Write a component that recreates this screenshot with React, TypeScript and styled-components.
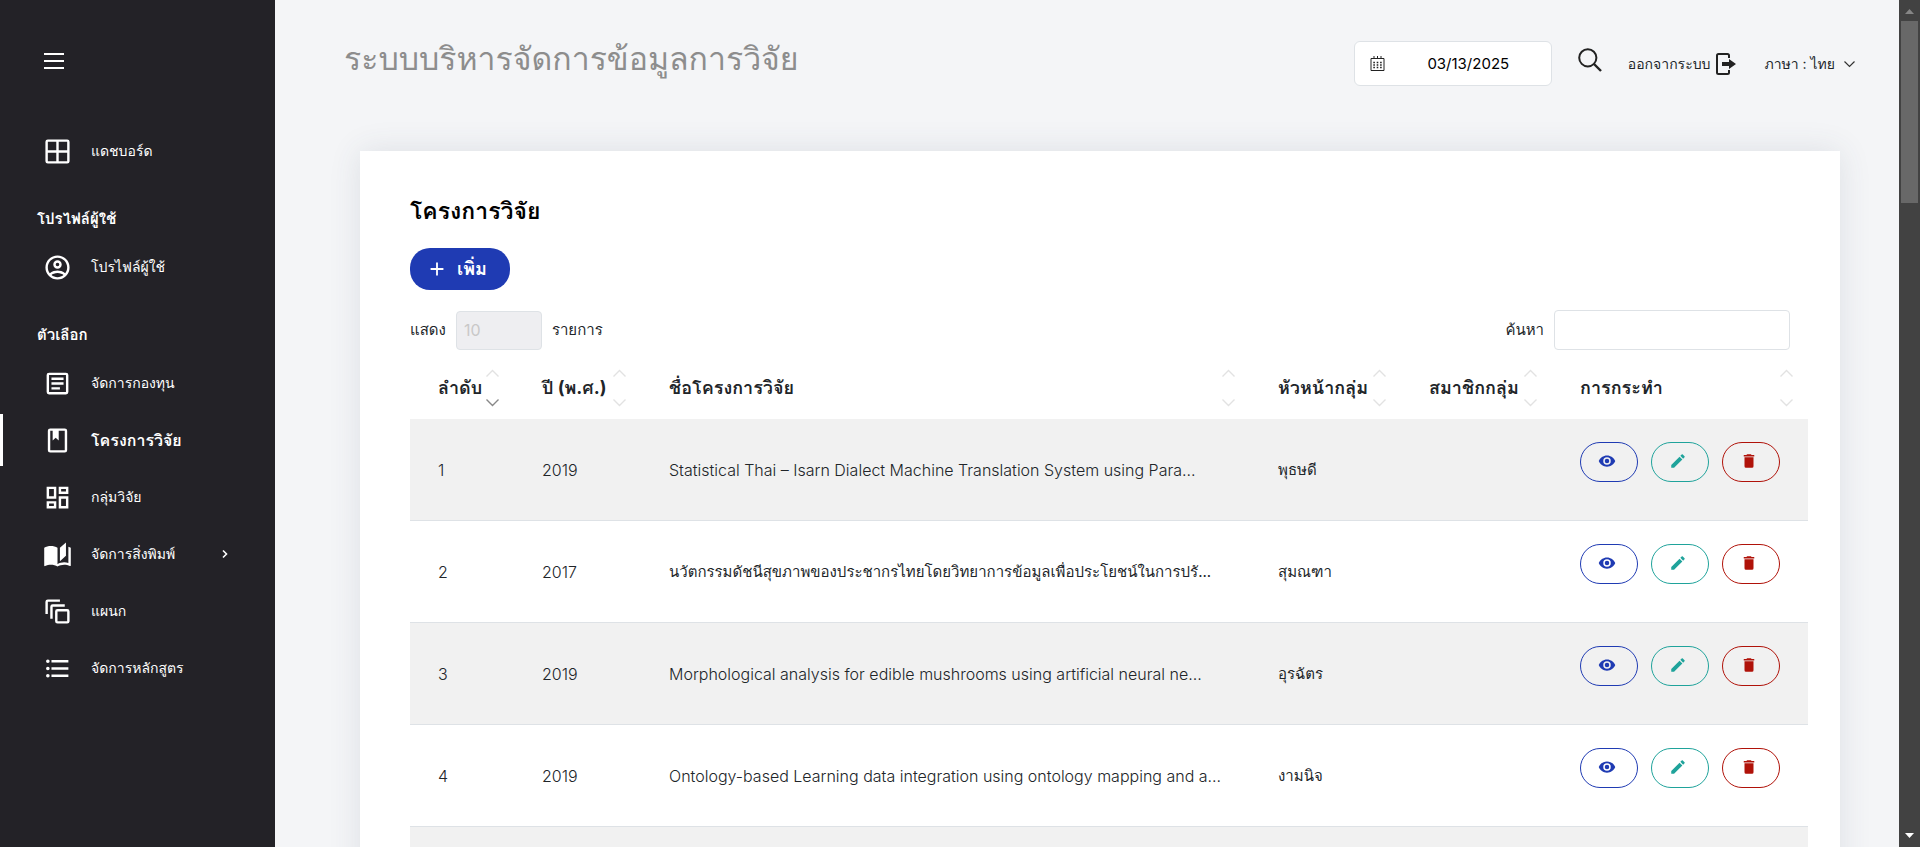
import React from 'react';
import styled, { createGlobalStyle } from 'styled-components';

const GlobalStyle = createGlobalStyle`
  *, *::before, *::after { box-sizing: border-box; }
  body {
    margin: 0;
    background: #f4f5f7;
    color: #212529;
    font-family: Inter, Loma, "Noto Sans", sans-serif;
    font-size: 14px;
    line-height: 20px;
  }
  a { color: inherit; text-decoration: none; }
  button, input, select { font: inherit; color: inherit; }
`;

const Shell = styled.div`
  display: flex;
  height: 100vh;
  overflow: hidden;
`;

const Sidebar = styled.aside`
  flex: 0 0 275px;
  background: #232227;
  color: #fff;
`;

const MenuToggle = styled.button`
  display: flex;
  margin: 51px 0 0 44px;
  padding: 0;
  border: 0;
  background: none;
  color: #fff;
`;

const Nav = styled.nav`
  display: flex;
  flex-direction: column;
  gap: 5px;
  padding-top: 54px;
`;

const NavCategory = styled.h2`
  margin: 0;
  padding: 27px 0 7px 37px;
  font-size: 15px;
  line-height: 20px;
  font-weight: 700;
`;

const NavItem = styled.a<{ $active?: boolean }>`
  display: flex;
  align-items: center;
  gap: 19px;
  height: 52px;
  padding: 0 46px 0 40px;
  border-left: 3px solid ${(p) => (p.$active ? '#fff' : 'transparent')};
  font-size: ${(p) => (p.$active ? '16px' : '14px')};
  font-weight: ${(p) => (p.$active ? 700 : 500)};
  svg:last-child:not(:first-child) { margin-left: auto; }
`;

const Main = styled.main`
  flex: 1;
  min-width: 0;
  overflow: hidden;
`;

const TopBar = styled.header`
  display: flex;
  align-items: center;
  height: 127px;
  padding: 0 44px 0 69px;
`;

const SiteTitle = styled.h1`
  margin: 0 auto 10px 0;
  color: #8d8d8d;
  font-size: 32px;
  line-height: 44px;
  font-weight: 400;
`;

const DateBox = styled.label`
  display: flex;
  align-items: center;
  width: 198px;
  height: 45px;
  padding-left: 14px;
  border: 1px solid #dee2e6;
  border-radius: 6px;
  background: #fff;
`;

const DateInput = styled.input`
  flex: 1;
  min-width: 0;
  margin: 0 10px;
  padding: 0;
  border: 0;
  outline: 0;
  background: none;
  color: #000;
  font-size: 15px;
  text-align: center;
`;

const SearchButton = styled.button`
  display: flex;
  margin: 0 26px 7px;
  padding: 0;
  border: 0;
  background: none;
`;

const TopLink = styled.a`
  display: flex;
  align-items: center;
  gap: 6px;
  margin-right: 28px;
`;

const LanguageButton = styled.button`
  display: flex;
  align-items: center;
  gap: 9px;
  padding: 0;
  border: 0;
  background: none;
`;

const Card = styled.section`
  margin: 24px 59px 0 85px;
  padding: 44px 50px;
  background: #fff;
  box-shadow: 0 0 30px rgba(60, 70, 100, 0.12);
`;

const CardTitle = styled.h2`
  margin: 0 0 21px;
  color: #000;
  font-size: 23px;
  line-height: 32px;
  font-weight: 700;
`;

const AddButton = styled.button`
  display: flex;
  align-items: center;
  gap: 9px;
  width: 100px;
  height: 42px;
  padding: 0 0 0 16px;
  border: 0;
  border-radius: 20px;
  background: #1f3bb3;
  color: #fff;
  font-size: 18px;
  font-weight: 700;
`;

const Controls = styled.div`
  display: flex;
  align-items: center;
  justify-content: space-between;
  height: 40px;
  margin: 20px 0 8px;
  font-size: 15px;
`;

const Field = styled.label`
  display: flex;
  align-items: center;
  gap: 10px;
`;

const LengthSelect = styled.select`
  appearance: none;
  width: 86px;
  height: 39px;
  padding: 0 7px;
  border: 1px solid #dee2e6;
  border-radius: 4px;
  background: #eeeef1;
  color: #c9c8c8;
  font-size: 16px;
  opacity: 1;
`;

const FilterInput = styled.input`
  width: 236px;
  height: 40px;
  padding: 0 8px;
  border: 1px solid #dee2e6;
  border-radius: 4px;
  background: #fff;
  outline: 0;
`;

const Table = styled.table`
  width: calc(100% + 18px);
  table-layout: fixed;
  border-collapse: separate;
  border-spacing: 0;
`;

const Col = styled.col<{ $w?: number }>`
  width: ${(p) => (p.$w ? `${p.$w}px` : 'auto')};
`;

const HeadCell = styled.th`
  height: 61px;
  padding: 0 15px 2px 28px;
  font-size: 18px;
  font-weight: 700;
  text-align: left;
  white-space: nowrap;
`;

const HeadContent = styled.div`
  display: flex;
  align-items: center;
  justify-content: space-between;
`;

const BodyRow = styled.tr`
  &:nth-child(odd) td { background: #f1f1f1; }
`;

const Cell = styled.td<{ $thai?: boolean }>`
  height: 102px;
  padding: 0 0 0 28px;
  border-bottom: 1px solid #dee2e6;
  font-size: ${(p) => (p.$thai ? '15px' : '16px')};
  font-weight: ${(p) => (p.$thai ? 400 : 300)};
  white-space: nowrap;
`;

const Actions = styled.div`
  display: flex;
  gap: 13px;
  padding-bottom: 16px;
`;

const ActionButton = styled.button<{ $color: string }>`
  display: flex;
  align-items: center;
  justify-content: center;
  width: 58px;
  height: 40px;
  padding: 0 4px 2px 0;
  border: 1px solid ${(p) => p.$color};
  border-radius: 20px;
  background: transparent;
  color: ${(p) => p.$color};
`;

const Scrollbar = styled.div`
  display: flex;
  flex-direction: column;
  align-items: center;
  justify-content: space-between;
  flex: 0 0 21px;
  padding: 9px 0;
  background: #424242;
`;

const ScrollTop = styled.div`
  display: flex;
  flex-direction: column;
  align-items: center;
  gap: 7px;
  height: 23.4%;
`;

const Thumb = styled.div`
  flex: 1;
  width: 17px;
  background: #686868;
`;

const MdiIcon = ({ d, size = 29 }: { d: string; size?: number }) => (
  <svg width={size} height={size} viewBox="0 0 24 24" fill="currentColor" aria-hidden="true">
    <path d={d} fillRule="evenodd" />
  </svg>
);

const icons = {
  grid: 'M4,2H20A2,2 0 0,1 22,4V20A2,2 0 0,1 20,22H4A2,2 0 0,1 2,20V4A2,2 0 0,1 4,2M4,4V11H11V4H4M4,20H11V13H4V20M20,20V13H13V20H20M20,4H13V11H20V4Z',
  account: 'M12,2A10,10 0 0,0 2,12A10,10 0 0,0 12,22A10,10 0 0,0 22,12A10,10 0 0,0 12,2M7.07,18.28C7.5,17.38 10.12,16.5 12,16.5C13.88,16.5 16.5,17.38 16.93,18.28C15.57,19.36 13.86,20 12,20C10.14,20 8.43,19.36 7.07,18.28M18.36,16.83C16.93,15.09 13.46,14.5 12,14.5C10.54,14.5 7.07,15.09 5.64,16.83C4.62,15.5 4,13.82 4,12C4,7.59 7.59,4 12,4C16.41,4 20,7.59 20,12C20,13.82 19.38,15.5 18.36,16.83M12,6C10.06,6 8.5,7.56 8.5,9.5C8.5,11.44 10.06,13 12,13C13.94,13 15.5,11.44 15.5,9.5C15.5,7.56 13.94,6 12,6M12,11A1.5,1.5 0 0,1 10.5,9.5A1.5,1.5 0 0,1 12,8A1.5,1.5 0 0,1 13.5,9.5A1.5,1.5 0 0,1 12,11Z',
  document: 'M5,3H19A2,2 0 0,1 21,5V19A2,2 0 0,1 19,21H5A2,2 0 0,1 3,19V5A2,2 0 0,1 5,3M5,5V19H19V5H5M7,7H17V9H7V7M7,11H17V13H7V11M7,15H14V17H7V15Z',
  book: 'M18,2A2,2 0 0,1 20,4V20A2,2 0 0,1 18,22H6A2,2 0 0,1 4,20V4A2,2 0 0,1 6,2H18M18,4H13V12L10.5,9.75L8,12V4H6V20H18V4Z',
  dashboard: 'M19,5V7H15V5H19M9,5V11H5V5H9M19,13V19H15V13H19M9,17V19H5V17H9M21,3H13V9H21V3M11,3H3V13H11V3M21,11H13V21H21V11M11,15H3V21H11V15Z',
  openBook: 'M19,2L14,6.5V17.5L19,13V2M6.5,5C4.55,5 2.45,5.4 1,6.5V21.16C1,21.41 1.25,21.66 1.5,21.66C1.6,21.66 1.65,21.59 1.75,21.59C3.1,20.94 5.05,20.5 6.5,20.5C8.45,20.5 10.55,20.9 12,22C13.35,21.15 15.8,20.5 17.5,20.5C19.15,20.5 20.85,20.81 22.25,21.56C22.35,21.61 22.4,21.59 22.5,21.59C22.75,21.59 23,21.34 23,21.09V6.5C22.4,6.05 21.75,5.75 21,5.5V19C19.9,18.65 18.7,18.5 17.5,18.5C15.8,18.5 13.35,19.15 12,20V6.5C10.55,5.4 8.45,5 6.5,5Z',
  layers: 'M4,2A2,2 0 0,0 2,4V14H4V4H14V2H4M8,6A2,2 0 0,0 6,8V18H8V8H18V6H8M20,12V20H12V12H20M20,10H12A2,2 0 0,0 10,12V20A2,2 0 0,0 12,22H20A2,2 0 0,0 22,20V12A2,2 0 0,0 20,10Z',
  list: 'M7,5H21V7H7V5M7,13V11H21V13H7M4,4.5A1.5,1.5 0 0,1 5.5,6A1.5,1.5 0 0,1 4,7.5A1.5,1.5 0 0,1 2.5,6A1.5,1.5 0 0,1 4,4.5M4,10.5A1.5,1.5 0 0,1 5.5,12A1.5,1.5 0 0,1 4,13.5A1.5,1.5 0 0,1 2.5,12A1.5,1.5 0 0,1 4,10.5M7,19V17H21V19H7M4,16.5A1.5,1.5 0 0,1 5.5,18A1.5,1.5 0 0,1 4,19.5A1.5,1.5 0 0,1 2.5,18A1.5,1.5 0 0,1 4,16.5Z',
  eye: 'M12,9A3,3 0 0,0 9,12A3,3 0 0,0 12,15A3,3 0 0,0 15,12A3,3 0 0,0 12,9M12,17A5,5 0 0,1 7,12A5,5 0 0,1 12,7A5,5 0 0,1 17,12A5,5 0 0,1 12,17M12,4.5C7,4.5 2.73,7.61 1,12C2.73,16.39 7,19.5 12,19.5C17,19.5 21.27,16.39 23,12C21.27,7.61 17,4.5 12,4.5Z',
  pencil: 'M20.71,7.04C21.1,6.65 21.1,6 20.71,5.63L18.37,3.29C18,2.9 17.35,2.9 16.96,3.29L15.12,5.12L18.87,8.87M3,17.25V21H6.75L17.81,9.93L14.06,6.18L3,17.25Z',
  trash: 'M19,4H15.5L14.5,3H9.5L8.5,4H5V6H19M6,19A2,2 0 0,0 8,21H16A2,2 0 0,0 18,19V7H6V19Z',
  plus: 'M19,13H13V19H11V13H5V11H11V5H13V11H19V13Z',
};

const SortArrows = ({ active }: { active?: boolean }) => (
  <svg width="13" height="38" viewBox="0 0 13 38" fill="none" strokeWidth="1.4" aria-hidden="true">
    <path d="M.5 7.5 6.5 1.5l6 6" stroke="#e2e2e2" />
    <path d="M.5 30.5l6 6 6-6" stroke={active ? '#888' : '#e2e2e2'} />
  </svg>
);

const CalendarIcon = () => (
  <svg width="17" height="17" viewBox="0 0 16 17" fill="none" stroke="#222" aria-hidden="true">
    <path d="M1.5 3.5h13v12h-13zM4.5 1v3M8 1v3M11.5 1v3" />
    <path d="M3.8 7.5h1.6M7.2 7.5h1.6M10.6 7.5h1.6M3.8 10h1.6M7.2 10h1.6M10.6 10h1.6M3.8 12.5h1.6M7.2 12.5h1.6M10.6 12.5h1.6" strokeWidth="1.4" />
  </svg>
);

const columns = [
  { label: 'ลำดับ', width: 104, active: true },
  { label: 'ปี (พ.ศ.)', width: 127 },
  { label: 'ชื่อโครงการวิจัย' },
  { label: 'หัวหน้ากลุ่ม', width: 151 },
  { label: 'สมาชิกกลุ่ม', width: 151 },
  { label: 'การกระทำ', width: 256 },
];

const projects = [
  { id: 1, year: '2019', name: 'Statistical Thai – Isarn Dialect Machine Translation System using Para...', head: 'พุธษดี' },
  { id: 2, year: '2017', name: 'นวัตกรรมดัชนีสุขภาพของประชากรไทยโดยวิทยาการข้อมูลเพื่อประโยชน์ในการปรั...', head: 'สุมณฑา', thai: true },
  { id: 3, year: '2019', name: 'Morphological analysis for edible mushrooms using artificial neural ne...', head: 'อุรฉัตร' },
  { id: 4, year: '2019', name: 'Ontology-based Learning data integration using ontology mapping and a...', head: 'งามนิจ' },
];

const options = [
  { icon: icons.document, label: 'จัดการกองทุน' },
  { icon: icons.book, label: 'โครงการวิจัย', active: true },
  { icon: icons.dashboard, label: 'กลุ่มวิจัย' },
  { icon: icons.openBook, label: 'จัดการสิ่งพิมพ์', expandable: true },
  { icon: icons.layers, label: 'แผนก' },
  { icon: icons.list, label: 'จัดการหลักสูตร' },
];

export default function App() {
  return (
    <Shell>
      <GlobalStyle />
      <Sidebar>
        <MenuToggle type="button" aria-label="เมนู">
          <svg width="20" height="20" viewBox="0 0 20 20" stroke="currentColor" strokeWidth="2">
            <path d="M0 3h20M0 10h20M0 17h20" />
          </svg>
        </MenuToggle>
        <Nav>
          <NavItem href="#dashboard"><MdiIcon d={icons.grid} />แดชบอร์ด</NavItem>
          <NavCategory>โปรไฟล์ผู้ใช้</NavCategory>
          <NavItem href="#profile"><MdiIcon d={icons.account} />โปรไฟล์ผู้ใช้</NavItem>
          <NavCategory>ตัวเลือก</NavCategory>
          {options.map((o) => (
            <NavItem key={o.label} href="#option" $active={o.active}>
              <MdiIcon d={o.icon} />
              {o.label}
              {o.expandable && (
                <svg width="8" height="10" viewBox="0 0 8 10" fill="none" stroke="currentColor" strokeWidth="1.6">
                  <path d="M2 1.5 5.5 5 2 8.5" />
                </svg>
              )}
            </NavItem>
          ))}
        </Nav>
      </Sidebar>

      <Main>
        <TopBar>
          <SiteTitle>ระบบบริหารจัดการข้อมูลการวิจัย</SiteTitle>
          <DateBox>
            <CalendarIcon />
            <DateInput type="text" defaultValue="03/13/2025" aria-label="วันที่" />
          </DateBox>
          <SearchButton type="button" aria-label="ค้นหา">
            <svg width="24" height="24" viewBox="0 0 24 24" fill="none" stroke="#222" strokeWidth="2">
              <circle cx="9.8" cy="9.8" r="8.6" />
              <path d="m16 16 7 7" strokeWidth="2.4" />
            </svg>
          </SearchButton>
          <TopLink href="#logout">
            ออกจากระบบ
            <svg width="20" height="22" viewBox="0 0 20 22" fill="none" stroke="#222" strokeWidth="2">
              <path d="M13 5V2.500a1.500 1.500 0 0 0-1.500-1.500h-9A1.500 1.500 0 0 0 1 2.500v17A1.500 1.500 0 0 0 2.500 21h9a1.500 1.500 0 0 0 1.500-1.500V17" />
              <path d="M6 9h7V6l7 5-7 5v-3H6z" fill="#222" stroke="none" />
            </svg>
          </TopLink>
          <LanguageButton type="button">
            ภาษา : ไทย
            <svg width="11" height="8" viewBox="0 0 11 8" fill="none" stroke="#333" strokeWidth="1.2">
              <path d="m.5 1.5 5 5 5-5" />
            </svg>
          </LanguageButton>
        </TopBar>

        <Card>
          <CardTitle>โครงการวิจัย</CardTitle>
          <AddButton type="button"><MdiIcon d={icons.plus} size={22} />เพิ่ม</AddButton>
          <Controls>
            <Field>
              แสดง
              <LengthSelect disabled defaultValue="10"><option>10</option></LengthSelect>
              รายการ
            </Field>
            <Field>
              ค้นหา
              <FilterInput type="search" />
            </Field>
          </Controls>
          <Table>
            <colgroup>
              {columns.map((c) => <Col key={c.label} $w={c.width} />)}
            </colgroup>
            <thead>
              <tr>
                {columns.map((c) => (
                  <HeadCell key={c.label} scope="col">
                    <HeadContent>{c.label}<SortArrows active={c.active} /></HeadContent>
                  </HeadCell>
                ))}
              </tr>
            </thead>
            <tbody>
              {projects.map((p) => (
                <BodyRow key={p.id}>
                  <Cell>{p.id}</Cell>
                  <Cell>{p.year}</Cell>
                  <Cell $thai={p.thai}>{p.name}</Cell>
                  <Cell $thai>{p.head}</Cell>
                  <Cell />
                  <Cell>
                    <Actions>
                      <ActionButton type="button" $color="#1f3bb3" aria-label="ดู"><MdiIcon d={icons.eye} size={18} /></ActionButton>
                      <ActionButton type="button" $color="#1fa39b" aria-label="แก้ไข"><MdiIcon d={icons.pencil} size={18} /></ActionButton>
                      <ActionButton type="button" $color="#b01209" aria-label="ลบ"><MdiIcon d={icons.trash} size={18} /></ActionButton>
                    </Actions>
                  </Cell>
                </BodyRow>
              ))}
              <BodyRow><Cell colSpan={6} /></BodyRow>
            </tbody>
          </Table>
        </Card>
      </Main>

      <Scrollbar aria-hidden="true">
        <ScrollTop>
          <svg width="9" height="5" viewBox="0 0 9 5" fill="#868686"><path d="M0 5 4.5 0 9 5z" /></svg>
          <Thumb />
        </ScrollTop>
        <svg width="9" height="5" viewBox="0 0 9 5" fill="#fff"><path d="M0 0h9L4.5 5z" /></svg>
      </Scrollbar>
    </Shell>
  );
}
